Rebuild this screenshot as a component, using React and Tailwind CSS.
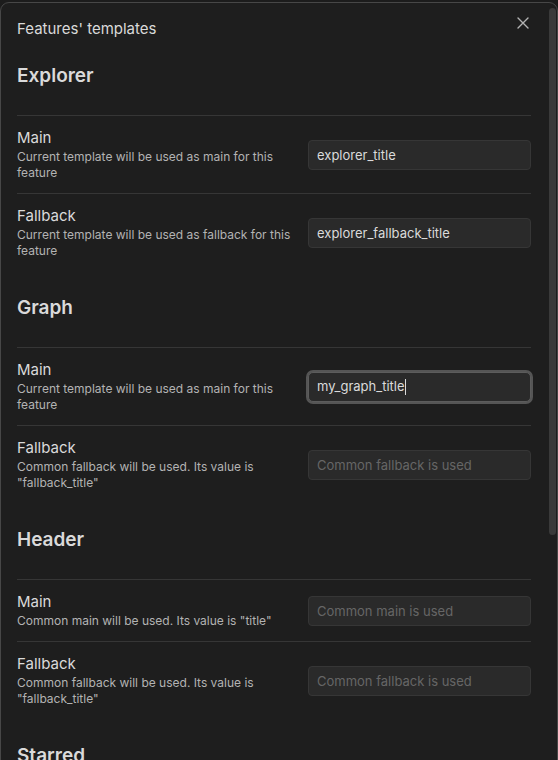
import React from "react";

const font = { fontFamily: "Inter, 'Noto Sans', sans-serif" };

function Heading({ children }) {
  return (
    <div className="pt-[26px] pb-[28px] text-[19px] leading-[22px] font-semibold text-[#dadada]">
      {children}
    </div>
  );
}

function Field({ value, placeholder, focused }) {
  if (focused) {
    return (
      <div className="w-[223px] h-[30px] rounded-[5px] bg-[#2a2a2a] border border-[#5c5c5c] shadow-[0_0_0_2px_#555555] px-2 flex items-center text-[13px] text-[#dadada]">
        <span>{value}</span>
        <span className="w-px h-[16px] bg-[#dadada]" />
      </div>
    );
  }
  return (
    <input
      readOnly
      value={value || ""}
      placeholder={placeholder}
      className="w-[223px] h-[30px] rounded-[4px] bg-[#2a2a2a] border border-[#363636] px-2 text-[13px] text-[#dadada] placeholder:text-[#666666] outline-none"
      style={font}
    />
  );
}

function Row({ name, desc, value, placeholder, focused }) {
  return (
    <div className="border-t border-[#363636] py-3 flex items-center">
      <div className="w-[275px]">
        <div className="text-[15px] leading-[19px] text-[#dadada]">{name}</div>
        <div className="pt-[2px] text-[12px] leading-[16px] text-[#b3b3b3]">{desc}</div>
      </div>
      <div className="ml-auto">
        <Field value={value} placeholder={placeholder} focused={focused} />
      </div>
    </div>
  );
}

export default function App() {
  return (
    <div className="w-[558px] h-[760px] bg-[#1c1c1c] overflow-hidden pt-[2px]" style={font}>
      <div className="relative w-[558px] h-[800px] bg-[#1e1e1e] border border-[#474747] rounded-t-[9px] pl-4 pr-[26px] pt-4">
        <button className="absolute left-[516px] top-[13px] w-[13px] h-[13px] text-[#b3b3b3]">
          <svg viewBox="0 0 12 12" width="12" height="12" fill="none" stroke="currentColor" strokeWidth="1.4" strokeLinecap="round">
            <path d="M1 1 L11 11 M11 1 L1 11" />
          </svg>
        </button>
        <div className="absolute left-[548px] top-[5px] w-[7px] h-[527px] rounded-full bg-[#3a3a3a]" />
        <div className="text-[15px] leading-[20px] text-[#dadada]">Features' templates</div>

        <Heading>Explorer</Heading>
        <Row name="Main" desc="Current template will be used as main for this feature" value="explorer_title" />
        <Row name="Fallback" desc="Current template will be used as fallback for this feature" value="explorer_fallback_title" />

        <Heading>Graph</Heading>
        <Row name="Main" desc="Current template will be used as main for this feature" value="my_graph_title" focused />
        <Row name="Fallback" desc={'Common fallback will be used. Its value is "fallback_title"'} placeholder="Common fallback is used" />

        <Heading>Header</Heading>
        <Row name="Main" desc={'Common main will be used. Its value is "title"'} placeholder="Common main is used" />
        <Row name="Fallback" desc={'Common fallback will be used. Its value is "fallback_title"'} placeholder="Common fallback is used" />

        <Heading>Starred</Heading>
      </div>
    </div>
  );
}
